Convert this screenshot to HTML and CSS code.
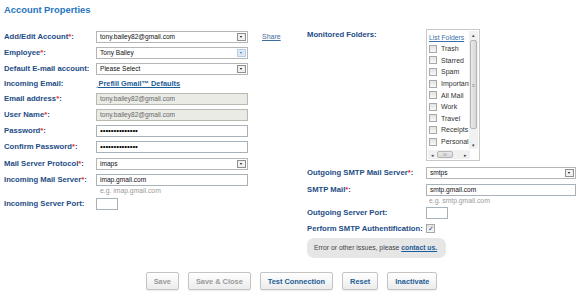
FILE: index.html
```html
<!DOCTYPE html>
<html lang="en">
<head>
    <meta charset="UTF-8">
    <title>Account Properties</title>
    <link rel="stylesheet" href="styles.css">
</head>
<body>
    <div class="page">
        <h1 class="page-title">Account Properties</h1>
        <div class="columns">
            <div class="col-left">
                <div class="row">
                    <label class="label">Add/Edit Account<span class="req">*</span>:</label>
                    <div class="select"><span class="select-text">tony.bailey82@gmail.com</span><span class="arrow"></span></div>
                    <a href="#" class="share">Share</a>
                </div>
                <div class="row">
                    <label class="label">Employee<span class="req">*</span>:</label>
                    <div class="select"><span class="select-text">Tony Bailey</span><span class="arrow arrow-hover"></span></div>
                </div>
                <div class="row">
                    <label class="label">Default E-mail account:</label>
                    <div class="select"><span class="select-text">Please Select</span><span class="arrow"></span></div>
                </div>
                <div class="row row-link">
                    <label class="label">Incoming Email:</label>
                    <a href="#" class="prefill">&#184;Prefill Gmail&trade; Defaults</a>
                </div>
                <div class="row">
                    <label class="label">Email address<span class="req">*</span>:</label>
                    <div class="input input-disabled">tony.bailey82@gmail.com</div>
                </div>
                <div class="row">
                    <label class="label">User Name<span class="req">*</span>:</label>
                    <div class="input input-disabled">tony.bailey82@gmail.com</div>
                </div>
                <div class="row">
                    <label class="label">Password<span class="req">*</span>:</label>
                    <div class="input input-pass">&bull;&bull;&bull;&bull;&bull;&bull;&bull;&bull;&bull;&bull;&bull;&bull;&bull;&bull;</div>
                </div>
                <div class="row row-tall">
                    <label class="label">Confirm Password<span class="req">*</span>:</label>
                    <div class="input input-pass">&bull;&bull;&bull;&bull;&bull;&bull;&bull;&bull;&bull;&bull;&bull;&bull;&bull;&bull;</div>
                </div>
                <div class="row">
                    <label class="label">Mail Server Protocol<span class="req">*</span>:</label>
                    <div class="select"><span class="select-text">imaps</span><span class="arrow"></span></div>
                </div>
                <div class="row row-hint">
                    <label class="label">Incoming Mail Server<span class="req">*</span>:</label>
                    <div class="field">
                        <div class="input">imap.gmail.com</div>
                        <div class="hint">e.g. imap.gmail.com</div>
                    </div>
                </div>
                <div class="row">
                    <label class="label">Incoming Server Port:</label>
                    <div class="input input-port"></div>
                </div>
            </div>

            <div class="col-right">
                <div class="row row-folders">
                    <label class="label label-wide">Monitored Folders:</label>
                    <div class="folders">
                        <div class="folder-list">
                            <a href="#" class="list-link">List Folders</a>
                            <div class="folder"><span class="check"></span>Trash</div>
                            <div class="folder"><span class="check"></span>Starred</div>
                            <div class="folder"><span class="check"></span>Spam</div>
                            <div class="folder"><span class="check"></span>Important</div>
                            <div class="folder"><span class="check"></span>All Mail</div>
                            <div class="folder"><span class="check"></span>Work</div>
                            <div class="folder"><span class="check"></span>Travel</div>
                            <div class="folder"><span class="check"></span>Receipts</div>
                            <div class="folder"><span class="check"></span>Personal</div>
                        </div>
                        <div class="vscroll">
                            <span class="sb-arrow">&#9652;</span>
                            <span class="vthumb"><span class="grip">&#8801;</span></span>
                            <span class="sb-arrow">&#9662;</span>
                        </div>
                        <div class="hscroll">
                            <span class="sb-arrow">&#9666;</span>
                            <span class="hthumb">III</span>
                            <span class="sb-arrow">&#9656;</span>
                        </div>
                    </div>
                </div>
                <div class="row row-smtp">
                    <label class="label label-wide">Outgoing SMTP Mail Server<span class="req">*</span>:</label>
                    <div class="select select-wide"><span class="select-text">smtps</span><span class="arrow"></span></div>
                </div>
                <div class="row row-hint2">
                    <label class="label label-wide">SMTP Mail<span class="req">*</span>:</label>
                    <div class="field">
                        <div class="input select-wide">smtp.gmail.com</div>
                        <div class="hint">e.g. smtp.gmail.com</div>
                    </div>
                </div>
                <div class="row">
                    <label class="label label-wide">Outgoing Server Port:</label>
                    <div class="input input-port"></div>
                </div>
                <div class="row row-auth">
                    <label class="label label-wide">Perform SMTP Authentification:</label>
                    <span class="check check-on">&#10003;</span>
                </div>
                <div class="note">Error or other issues, please <a href="#" class="note-link">contact us.</a></div>
            </div>
        </div>

        <div class="buttons">
            <button class="btn" disabled>Save</button>
            <button class="btn" disabled>Save &amp; Close</button>
            <button class="btn">Test Connection</button>
            <button class="btn">Reset</button>
            <button class="btn">Inactivate</button>
        </div>
    </div>
</body>
</html>
```

FILE: styles.css
```css
body, html {
    margin: 0;
    background: #fff;
    font-family: "Liberation Sans", Arial, sans-serif;
}
.page {
    padding: 4px 4px;
}
.page-title {
    margin: 0;
    font-size: 9.4px;
    line-height: 12px;
    font-weight: bold;
    color: #1f74bd;
}
.columns {
    display: flex;
    margin-top: 13px;
}
.col-left {
    width: 303px;
    padding-top: 2px;
}
.col-right {
    flex: 1;
}
.row {
    display: flex;
    align-items: flex-start;
    height: 16px;
}
.row-link {
    height: 14px;
}
.row-link .label,
.row-link .prefill {
    margin-top: -1px;
}
.row-tall {
    height: 17px;
}
.row-hint {
    height: 24px;
}
.label {
    width: 92px;
    flex: none;
    font-size: 7.7px;
    line-height: 12px;
    font-weight: bold;
    color: #1d4d85;
    white-space: nowrap;
}
.label-wide {
    width: 119px;
}
.req {
    color: #e8312f;
}
.select, .input {
    box-sizing: border-box;
    width: 152px;
    height: 12px;
    border: 1px solid #a9b1b9;
    background: #fff;
    font-size: 6.6px;
    line-height: 10px;
    color: #111;
    padding-left: 3px;
    white-space: nowrap;
}
.select {
    display: flex;
    justify-content: space-between;
    border-color: #b5b5b5;
}
.arrow {
    width: 9px;
    height: 8px;
    margin: 1px 1px 0 0;
    box-sizing: border-box;
    border: 1px solid #8f8f8f;
    background: #f0f0f0;
    position: relative;
}
.arrow::after {
    content: "";
    position: absolute;
    left: 2px;
    top: 2px;
    border-left: 1.5px solid transparent;
    border-right: 1.5px solid transparent;
    border-top: 2px solid #111;
}
.arrow-hover {
    border-color: #b7cbe4;
    background: #dde8f6;
}
.arrow-hover::after {
    border-top-color: #3d6fb4;
}
.input-disabled {
    background: #ebebe6;
    border-color: #b9b9b4;
    color: #6a6a6a;
}
.input-pass {
    font-size: 8px;
    letter-spacing: -0.1px;
    color: #000;
}
.input-port {
    width: 22px;
}
.share {
    margin-left: 14px;
    font-size: 7px;
    line-height: 12px;
    color: #3d6c9d;
}
.prefill {
    font-size: 7.4px;
    line-height: 12px;
    font-weight: bold;
    color: #1d5d97;
}
.hint {
    padding-left: 4px;
    font-size: 6.8px;
    line-height: 9px;
    color: #9a9a9a;
}

/* folder picker */
.row-folders {
    height: 138px;
}
.folders {
    position: relative;
    box-sizing: border-box;
    width: 54px;
    height: 132px;
    border: 1px solid #c9c9c9;
    overflow: hidden;
    background: #fff;
}
.folder-list {
    padding: 3px 0 0 2px;
    width: 41px;
    overflow: hidden;
}
.list-link {
    display: block;
    font-size: 6.8px;
    line-height: 10px;
    color: #3a6fa8;
    white-space: nowrap;
}
.folder {
    display: flex;
    align-items: center;
    height: 11.6px;
    font-size: 7px;
    color: #333;
    white-space: nowrap;
}
.check {
    flex: none;
    box-sizing: border-box;
    width: 8px;
    height: 8px;
    margin-right: 4px;
    border: 1px solid #a8a8a8;
    background: linear-gradient(#e2e2e2, #f8f8f8);
}
.vscroll {
    position: absolute;
    right: 1px;
    top: 1px;
    bottom: 11px;
    width: 9px;
    display: flex;
    flex-direction: column;
    align-items: center;
    justify-content: space-between;
    background: #f1f1f1;
}
.sb-arrow {
    font-size: 5px;
    line-height: 8px;
    color: #444;
}
.vthumb {
    flex: 1;
    width: 7px;
    margin: 1px 0 12px;
    box-sizing: border-box;
    border: 1px solid #b5b5b5;
    border-radius: 2px;
    background: linear-gradient(90deg, #e9e9e9, #d8d8d8);
    display: flex;
    align-items: center;
    justify-content: center;
}
.grip {
    font-size: 5px;
    color: #888;
}
.hscroll {
    position: absolute;
    left: 1px;
    bottom: 1px;
    width: 42px;
    height: 9px;
    display: flex;
    align-items: center;
    justify-content: space-between;
    padding: 0 3px;
    box-sizing: border-box;
    background: #f1f1f1;
}
.hthumb {
    box-sizing: border-box;
    height: 7px;
    width: 16px;
    margin-right: 8px;
    border: 1px solid #b5b5b5;
    border-radius: 2px;
    background: linear-gradient(#e9e9e9, #d8d8d8);
    font-size: 4px;
    line-height: 5px;
    color: #888;
    text-align: center;
}

/* smtp */
.row-smtp {
    height: 17px;
}
.select-wide {
    width: 150px;
}
.row-hint2 {
    height: 23px;
}
.row-hint2 .hint {
    padding-left: 3px;
}
.row-auth {
    height: 15px;
    margin-top: -2px;
    align-items: center;
}
.check-on {
    width: 9px;
    height: 9px;
    margin-right: 0;
    font-size: 7px;
    line-height: 7px;
    color: #2a4f8a;
    text-align: center;
}
.note {
    display: inline-block;
    padding: 0 7px;
    width: 139px;
    box-sizing: border-box;
    height: 20px;
    line-height: 20px;
    border-radius: 7px;
    background: #e6e6e6;
    font-size: 6.8px;
    color: #444;
    white-space: nowrap;
}
.note-link {
    font-weight: bold;
    color: #1d5d97;
}

/* buttons */
.buttons {
    display: flex;
    justify-content: center;
    gap: 9px;
    margin-top: 14px;
    padding-right: 3px;
}
.btn {
    height: 18px;
    padding: 0 7px;
    border: 1px solid #c4c4c4;
    border-radius: 2px;
    background: linear-gradient(#ffffff, #ececec);
    box-shadow: 0 1px 1px rgba(0, 0, 0, 0.08);
    font-family: "Liberation Sans", Arial, sans-serif;
    font-size: 7.4px;
    font-weight: bold;
    color: #1d5d97;
}
.btn:disabled {
    color: #9a9a9a;
}
```
